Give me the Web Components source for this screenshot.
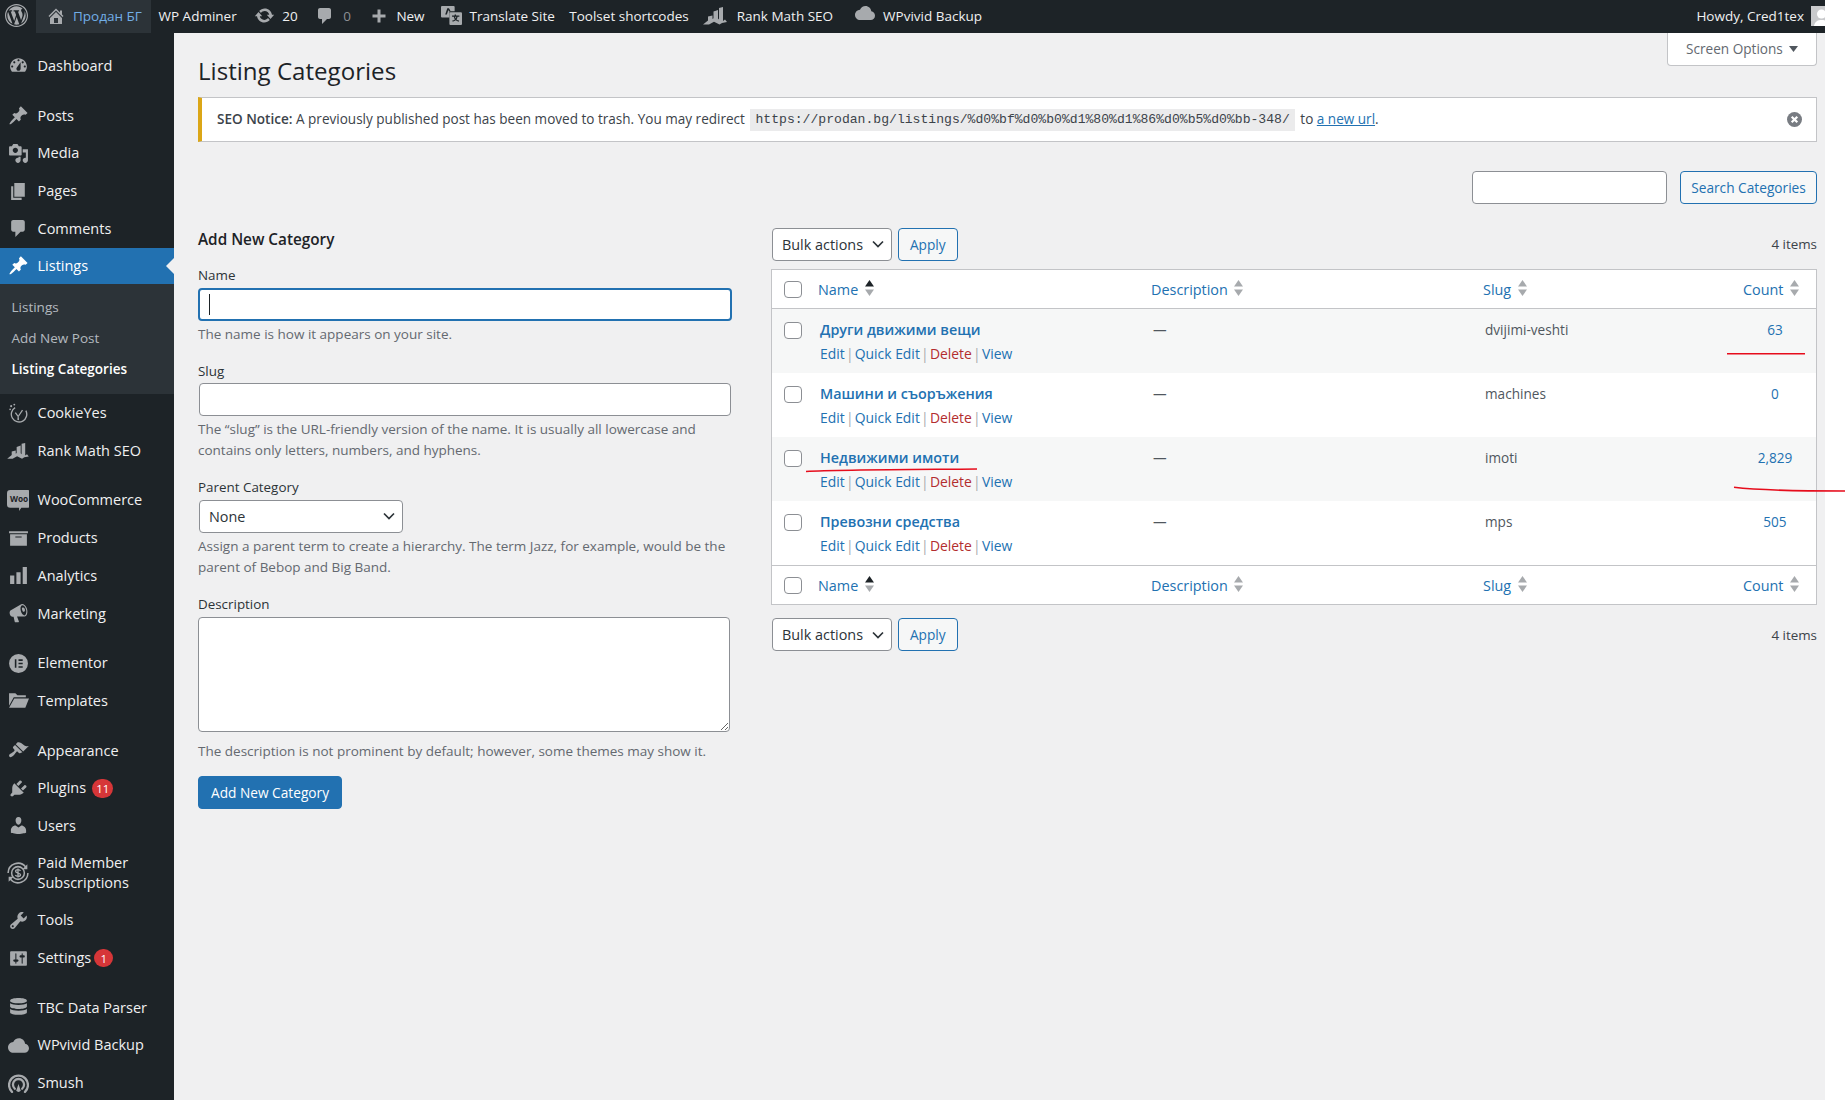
<!DOCTYPE html>
<html lang="en">
<head>
<meta charset="utf-8">
<title>Listing Categories</title>
<style>
  html { background: #fff; }
  body { margin: 0; font-family: "Open Sans", "Liberation Sans", sans-serif; font-size: 13.5px; color: #3c434a; }
</style>
</head>
<body>
<wp-shell>
  <wp-adminbar slot="bar"></wp-adminbar>
  <wp-sidebar slot="side">
    <wp-menu-item icon="dashboard">Dashboard</wp-menu-item>
    <wp-menu-sep></wp-menu-sep>
    <wp-menu-item icon="pin">Posts</wp-menu-item>
    <wp-menu-item icon="media">Media</wp-menu-item>
    <wp-menu-item icon="pages">Pages</wp-menu-item>
    <wp-menu-item icon="comment">Comments</wp-menu-item>
    <wp-menu-item icon="pin" active>Listings</wp-menu-item>
    <wp-submenu>
      <wp-sub-item>Listings</wp-sub-item>
      <wp-sub-item>Add New Post</wp-sub-item>
      <wp-sub-item current>Listing Categories</wp-sub-item>
    </wp-submenu>
    <wp-menu-item icon="cookie">CookieYes</wp-menu-item>
    <wp-menu-item icon="rank">Rank Math SEO</wp-menu-item>
    <wp-menu-sep></wp-menu-sep>
    <wp-menu-item icon="woo">WooCommerce</wp-menu-item>
    <wp-menu-item icon="archive">Products</wp-menu-item>
    <wp-menu-item icon="chart">Analytics</wp-menu-item>
    <wp-menu-item icon="megaphone">Marketing</wp-menu-item>
    <wp-menu-sep></wp-menu-sep>
    <wp-menu-item icon="elementor">Elementor</wp-menu-item>
    <wp-menu-item icon="folder">Templates</wp-menu-item>
    <wp-menu-sep></wp-menu-sep>
    <wp-menu-item icon="brush">Appearance</wp-menu-item>
    <wp-menu-item icon="plugin" badge="11">Plugins</wp-menu-item>
    <wp-menu-item icon="user">Users</wp-menu-item>
    <wp-menu-item icon="money" tall>Paid Member Subscriptions</wp-menu-item>
    <wp-menu-item icon="wrench">Tools</wp-menu-item>
    <wp-menu-item icon="sliders" badge="1">Settings</wp-menu-item>
    <wp-menu-sep></wp-menu-sep>
    <wp-menu-item icon="database">TBC Data Parser</wp-menu-item>
    <wp-menu-item icon="cloud">WPvivid Backup</wp-menu-item>
    <wp-menu-item icon="smush">Smush</wp-menu-item>
  </wp-sidebar>
  <wp-content slot="main">
    <wp-page-head>Listing Categories</wp-page-head>
    <wp-notice>
      <b>SEO Notice:</b> A previously published post has been moved to trash. You may redirect <code>https://prodan.bg/listings/%d0%bf%d0%b0%d1%80%d1%86%d0%b5%d0%bb-348/</code> to <a>a new url</a>.
    </wp-notice>
    <wp-search-box>Search Categories</wp-search-box>
    <wp-columns>
      <wp-term-form slot="left"></wp-term-form>
      <div slot="right">
        <wp-tablenav></wp-tablenav>
        <wp-terms-table>
          <wp-term-head></wp-term-head>
          <wp-term-row name="Други движими вещи" slug="dvijimi-veshti" count="63" alt></wp-term-row>
          <wp-term-row name="Машини и съоръжения" slug="machines" count="0"></wp-term-row>
          <wp-term-row name="Недвижими имоти" slug="imoti" count="2,829" alt></wp-term-row>
          <wp-term-row name="Превозни средства" slug="mps" count="505"></wp-term-row>
          <wp-term-head foot></wp-term-head>
        </wp-terms-table>
        <wp-tablenav bottom></wp-tablenav>
      </div>
    </wp-columns>
  </wp-content>
</wp-shell>
<red-marks></red-marks>

<script>
const ICONS = {
  logo: '<path d="M20 10c0-5.52-4.48-10-10-10S0 4.48 0 10s4.48 10 10 10 10-4.48 10-10zM10 1.01c4.96 0 8.99 4.03 8.99 8.99s-4.03 8.99-8.99 8.99S1.01 14.96 1.01 10 5.04 1.01 10 1.01zM8.01 14.82L4.96 6.61c.49-.03 1.05-.08 1.05-.08.43-.05.38-1.01-.06-.99 0 0-1.29.1-2.13.1-.15 0-.33 0-.52-.01 1.44-2.17 3.9-3.6 6.7-3.6 2.09 0 3.99.79 5.41 2.09-.6-.08-1.45.35-1.45 1.42 0 .66.38 1.22.79 1.88.31.54.5 1.22.5 2.21 0 1.34-1.27 4.48-1.27 4.48l-2.71-7.5c.48-.03.75-.16.75-.16.43-.05.38-1.1-.05-1.08 0 0-1.3.11-2.14.11-.78 0-2.11-.11-2.11-.11-.43-.02-.48 1.06-.05 1.08l.84.08 1.12 3.04zm6.02 2.15L16.64 10s.67-1.69.39-3.81c.63 1.14.94 2.42.94 3.81 0 2.96-1.56 5.58-3.94 6.97zM2.68 6.77L6.5 17.25c-2.67-1.3-4.47-4.08-4.47-7.25 0-1.16.2-2.23.65-3.23zm7.45 4.53l2.29 6.25c-.75.27-1.57.42-2.42.42-.72 0-1.41-.11-2.06-.3z"/>',
  home: '<path d="M16 8.5l1.53 1.53-1.06 1.06L10 4.62l-6.47 6.47-1.06-1.06L10 2.5l4 4v-2h2v4zm-6-2.46l6 5.99V18H4v-5.97zM12 17v-5H8v5h4z"/>',
  update: '<path d="M10.2 3.28c3.53 0 6.43 2.61 6.92 6h2.08l-3.5 4-3.5-4h2.32c-.45-1.97-2.21-3.45-4.32-3.45-1.45 0-2.73.71-3.54 1.78L4.95 5.66C6.23 4.2 8.11 3.28 10.2 3.28zm-.4 13.44c-3.52 0-6.43-2.61-6.92-6H.8l3.5-4c1.17 1.33 2.33 2.67 3.5 4H5.48c.45 1.97 2.21 3.45 4.32 3.45 1.45 0 2.73-.71 3.54-1.78l1.71 1.95c-1.28 1.46-3.15 2.38-5.25 2.38z"/>',
  comment: '<path d="M5 2h9c1.1 0 2 .9 2 2v7c0 1.1-.9 2-2 2h-2l-5 5v-5H5c-1.1 0-2-.9-2-2V4c0-1.1.9-2 2-2z"/>',
  plus: '<path d="M17 7v3h-5v5H9v-5H4V7h5V2h3v5h5z" transform="translate(-.5 1.5)"/>',
  translate: '<path d="M1 1h11a1 1 0 0 1 1 1v4H8v6H1a1 1 0 0 1-1-1V2a1 1 0 0 1 1-1z"/><path d="M4 9l2-6h1.6l1.6 3H7.6L7 4.8 5.6 9z" fill="#1d2327"/><path fill-rule="evenodd" d="M9 7h10a1 1 0 0 1 1 1v10a1 1 0 0 1-1 1H9a1 1 0 0 1-1-1V8a1 1 0 0 1 1-1zm1.5 3v1.3h1.7c.2 1 .6 1.8 1 2.4-.7.5-1.5.8-2.5 1l.5 1.2c1.2-.3 2.100-.7 2.800-1.300.7.6 1.600 1 2.800 1.300l.5-1.200c-1-.2-1.800-.5-2.500-1 .5-.7.8-1.400 1-2.400h1.700V10h-3.200V9h-1.300v1zm3.500 2.800c-.3-.4-.5-.9-.6-1.500h1.200c-.1.600-.3 1.100-.6 1.500z"/>',
  rank: '<path d="M0 18.500L5 14.500V10.500L9.500 9.500V13L10.500 12.300V5.500L15 4V12.500L16 13.500V2L20 1V15L22 13.500L24 16L19 17L16.500 18.500L11 15.800L6 18.500z"/>',
  cloud: '<path d="M16.300 8.300C16 5.300 13.500 3 10.500 3 8 3 5.900 4.500 5 6.700c-2.800.2-5 2.400-5 5.200C0 14.700 2.300 17 5.200 17h10.500c2.400 0 4.300-1.900 4.300-4.300 0-2.200-1.600-4-3.700-4.400z"/>',
  dashboard: '<path fill-rule="evenodd" d="M3.760 16h12.480c1.100-1.370 1.760-3.110 1.760-5 0-4.420-3.580-8-8-8s-8 3.580-8 8c0 1.890.66 3.630 1.760 5zM10 4c.55 0 1 .45 1 1s-.45 1-1 1-1-.45-1-1 .45-1 1-1zM6 6c.55 0 1 .45 1 1s-.45 1-1 1-1-.45-1-1 .45-1 1-1zm8 0c.55 0 1 .45 1 1s-.45 1-1 1-1-.45-1-1 .45-1 1-1zm-5.370 5.550L12 7v6c0 1.100-.9 2-2 2s-2-.9-2-2c0-.57.24-1.080.63-1.450zM4 10c.55 0 1 .45 1 1s-.45 1-1 1-1-.45-1-1 .45-1 1-1zm12 0c.55 0 1 .45 1 1s-.45 1-1 1-1-.45-1-1 .45-1 1-1z"/>',
  pin: '<path d="M10.440 3.020l1.820-1.820 6.360 6.350-1.830 1.820c-1.050-.68-2.480-.57-3.410.36l-.75.75c-.92.93-1.040 2.350-.35 3.410l-1.830 1.820-2.410-2.410-2.800 2.790c-.42.42-3.380 2.710-3.800 2.290s1.860-3.390 2.280-3.810l2.790-2.790L4.100 9.360l1.830-1.820c1.050.69 2.480.57 3.400-.36l.75-.75c.93-.92 1.050-2.350.36-3.410z"/>',
  media: '<path fill-rule="evenodd" d="M13 11V4c0-.55-.45-1-1-1h-1.670L9 1H5L3.670 3H2c-.55 0-1 .45-1 1v7c0 .55.45 1 1 1h10c.55 0 1-.45 1-1zM7 4.500c1.380 0 2.500 1.120 2.500 2.500S8.380 9.500 7 9.500 4.500 8.380 4.500 7 5.620 4.500 7 4.500z"/><path d="M14 6h5v10.500c0 1.380-1.120 2.500-2.500 2.500S14 17.880 14 16.500s1.120-2.500 2.500-2.500c.17 0 .34.02.5.05V9h-3V6zm-4 8.050V13h2v3.500c0 1.380-1.120 2.500-2.500 2.500S7 17.880 7 16.500 8.120 14 9.500 14c.17 0 .34.02.5.05z"/>',
  pages: '<path d="M6 15V2h10v13H6zm-1 1h8v2H3V5h2v11z"/>',
  cookie: '<path d="M6.500 3.800A8 8 0 1 0 17.600 7l-1.200.6A6.700 6.700 0 1 1 7.100 5z"/><path d="M6.500 9.500l1-.7 2.200 3 3.600-5.300 1 .7-4.600 6.700z"/><rect x="9" y="13.500" width="1.400" height="2.800"/><circle cx="3" cy="3" r="1"/><circle cx="6" cy="1.500" r=".9"/><circle cx="2" cy="6" r=".8"/>',
  woo: '<path d="M3 1h16a3 3 0 0 1 3 3v10a3 3 0 0 1-3 3h-6l-2 3v-3H3a3 3 0 0 1-3-3V4a3 3 0 0 1 3-3z"/><text x="11" y="12" text-anchor="middle" font-family="Open Sans, sans-serif" font-size="7.500" font-weight="700" fill="#1d2327">Woo</text>',
  archive: '<path fill-rule="evenodd" d="M19 3v2H1V3h18zM2 6h16v11H2V6zm11 3V8H7v1h6z"/>',
  chart: '<path d="M18 18V2h-4v16h4zm-6 0V7H8v11h4zm-6 0v-8H2v8h4z"/>',
  megaphone: '<path fill-rule="evenodd" d="M18.150 5.940c.46 1.620.38 3.220-.02 4.480-.42 1.280-1.260 2.180-2.300 2.480-.16.06-.26.06-.4.06H8.600l1.800 4.700c.1.300-.2.640-.5.640H7c-.3 0-.5-.2-.6-.5L5.300 13h-1c-.5.060-1.080-.18-1.540-.62s-.88-1.080-1.060-1.880c-.24-.8-.2-1.560-.02-2.200.18-.62.58-1.080 1.060-1.300l9-5.400c.34-.22.6-.35.98-.46 1.040-.3 2.240.1 3.220.98.98.86 1.840 2.260 2.260 3.860zm-2.580 5.980c.4-.1.740-.34 1.040-.7.58-.7.860-1.760.860-3.040-.02-.64-.1-1.300-.28-1.980-.34-1.360-1.020-2.500-1.780-3.240-.56-.54-1.280-.96-1.900-.84-.2.040-.32.100-.5.220-.58.42-.96 1.200-1.080 2.260-.1.900-.02 1.850.32 2.920.42 1.600 1.240 2.940 2.200 3.720.48.38.96.620 1.420.7zm-1.300-3.500a2 2 0 1 0-1-3.800c-.12 1.300.300 2.700 1 3.800z"/>',
  elementor: '<path fill-rule="evenodd" d="M10 1a9 9 0 1 0 0 18 9 9 0 0 0 0-18zM6.500 6H8v8H6.500zM10 6h4v1.500h-4zm0 3.250h4v1.500h-4zm0 3.250h4V14h-4z"/>',
  folder: '<path d="M1 3h6l2 2h8v2H5.500L1 15z"/><path d="M6 8h14l-3.500 9H1z"/>',
  brush: '<path d="M14.480 11.060L7.410 3.990l1.500-1.500c.5-.56 2.300-.47 3.510.32 1.210.8 1.430 1.280 2.910 2.100 1.180.64 2.450 1.260 4.450.85zm-.71.71L6.700 4.700 4.930 6.470c-.39.39-.39 1.020 0 1.410l1.060 1.060c.39.39.39 1.030 0 1.420-.6.6-1.430 1.110-2.210 1.690-.35.26-.7.53-1.010.84C1.430 13.230.4 14.950 1.400 15.950s2.720-.03 4.060-1.370c.3-.31.58-.66.84-1.010.58-.78 1.090-1.610 1.690-2.210.39-.39 1.020-.39 1.410 0l1.060 1.060c.39.39 1.020.39 1.410 0z"/>',
  plugin: '<path d="M13.110 4.360L9.870 7.600 8 5.730l3.240-3.240c.35-.34 1.050-.2 1.560.32.52.51.66 1.210.31 1.550zm-8 1.770l.91-1.120 9.010 9.010-1.190.84c-.71.71-2.630 1.160-3.820 1.160H6.140L4.900 17.260c-.59.59-1.540.59-2.120 0-.59-.58-.59-1.530 0-2.120l1.240-1.240v-3.880c0-1.130.4-3.190 1.090-3.890zm7.260 3.970l3.240-3.240c.34-.35 1.040-.21 1.550.31.52.51.66 1.210.31 1.550l-3.240 3.250z"/>',
  user: '<path d="M10 9.250c-2.270 0-2.730-3.440-2.730-3.440C7 4.020 7.820 2 9.970 2c2.160 0 2.980 2.020 2.710 3.810 0 0-.41 3.440-2.680 3.440zm0 2.570L12.720 10c2.390 0 4.520 2.330 4.520 4.530v2.490s-3.650 1.130-7.240 1.130c-3.650 0-7.240-1.130-7.240-1.130v-2.490c0-2.250 1.940-4.480 4.470-4.480z"/>',
  money: '<g fill="none" stroke="currentColor"><circle cx="10" cy="10" r="5.800" stroke-width="1.400"/><path d="M1 10a9 9 0 0 1 16-5.500M19 10a9 9 0 0 1-16 5.500" stroke-width="1.400"/><path d="M12.200 8.200c-.4-.9-1.200-1.200-2.200-1.200-1.300 0-2.200.6-2.200 1.500 0 2.200 4.500.9 4.500 3.100 0 .9-1 1.500-2.300 1.500-1.100 0-2-.4-2.400-1.300M10 5.800v8.400" stroke-width="1.200"/></g><path d="M18.500 2v4.500H14zM1.500 18v-4.500H6z"/>',
  wrench: '<path fill-rule="evenodd" d="M16.680 9.770c-1.340 1.340-3.300 1.670-4.950.99l-5.410 6.520c-.99.99-2.590.99-3.580 0s-.99-2.590 0-3.570l6.520-5.420c-.68-1.650-.35-3.610.99-4.950 1.280-1.280 3.120-1.620 4.720-1.060l-2.890 2.890 2.820 2.820 2.860-2.870c.53 1.580.18 3.390-1.080 4.650zM3.810 16.210c.4.39 1.040.39 1.430 0 .4-.4.4-1.040 0-1.430-.39-.4-1.030-.4-1.430 0-.39.39-.39 1.030 0 1.430z"/>',
  sliders: '<path fill-rule="evenodd" d="M18 16V4c0-.55-.45-1-1-1H3c-.55 0-1 .45-1 1v12c0 .55.45 1 1 1h14c.55 0 1-.45 1-1zM8 11h1c.55 0 1 .45 1 1s-.45 1-1 1H8v1.500c0 .28-.22.5-.5.5s-.5-.22-.5-.5V13H6c-.55 0-1-.45-1-1s.45-1 1-1h1V5.500c0-.28.22-.5.5-.5s.5.22.5.5V11zm5-2h-1c-.55 0-1-.45-1-1s.45-1 1-1h1V5.500c0-.28.22-.5.5-.5s.5.22.5.5V7h1c.55 0 1 .45 1 1s-.45 1-1 1h-1v5.500c0 .28-.22.5-.5.5s-.5-.22-.5-.5V9z"/>',
  database: '<path d="M10 1c4 0 8 .8 8 2.500S14 6 10 6 2 5.200 2 3.500 6 1 10 1zM2 6c1.500 1.200 4.500 1.600 8 1.600s6.500-.4 8-1.600v3c0 1.500-4 2.400-8 2.400S2 10.500 2 9zm0 5.500c1.500 1.200 4.500 1.600 8 1.600s6.500-.4 8-1.600v3c0 1.700-4 2.500-8 2.500s-8-.8-8-2.500z"/>',
  smush: '<g fill="none" stroke="currentColor" stroke-linecap="round"><path stroke-width="2.200" d="M3.800 18a9 9 0 1 1 12.400 0"/><path stroke-width="2.200" d="M6.500 15a5.300 5.300 0 1 1 7 0"/></g><path d="M7.800 17l2.200-6.500 2.200 6.500a2.800 2.800 0 0 1-4.400 0z"/>'
};

function svgIcon(name, w, h, vb) {
  return `<svg xmlns="http://www.w3.org/2000/svg" width="${w}" height="${h || w}" viewBox="${vb || '0 0 20 20'}" fill="currentColor" aria-hidden="true">${ICONS[name]}</svg>`;
}

class WpShell extends HTMLElement {
  constructor() {
    super();
    this.attachShadow({ mode: 'open' });
    this.shadowRoot.innerHTML = `<style>
      :host { display: grid; grid-template-columns: 174px 1fr; grid-template-rows: 33px 1067px; width: 1825px; height: 1100px; overflow: hidden; background: #f0f0f1; }
      .bar { grid-column: 1 / 3; }
    </style>
    <div class="bar"><slot name="bar"></slot></div>
    <slot name="side"></slot>
    <slot name="main"></slot>`;
  }
}

class WpAdminbar extends HTMLElement {
  constructor() {
    super();
    this.attachShadow({ mode: 'open' });
    this.shadowRoot.innerHTML = `<style>
      :host { display: flex; align-items: center; box-sizing: border-box; height: 33px; padding-bottom: 1.5px; background: #1d2327; color: #f0f0f1; font-size: 13.5px; overflow: hidden; white-space: nowrap; }
      .ico { color: #a7aaad; display: flex; flex: none; }
      .logo { margin-left: 5px; width: 31px; }
      .site { display: flex; align-items: center; align-self: flex-start; height: 33px; padding: 0 0 1.5px 10px; background: #2c3338; width: 115px; box-sizing: border-box; color: #72aee6; gap: 7px; }
      .muted { color: #8c8f94; }
      .right { margin-left: auto; display: flex; align-items: center; }
      .avatar { width: 21px; height: 20px; margin-left: 7px; margin-right: -7px; display: block; flex: none; }
    </style>
    <span class="ico logo">${svgIcon('logo', 23)}</span>
    <span class="site"><span class="ico">${svgIcon('home', 20)}</span>Продан БГ</span>
    <span style="margin-left:7.5px">WP Adminer</span>
    <span class="ico" style="margin-left:17px">${svgIcon('update', 21)}</span>
    <span style="margin-left:7.500px">20</span>
    <span class="ico" style="margin-left:17.500px">${svgIcon('comment', 20)}</span>
    <span class="muted" style="margin-left:8px">0</span>
    <span class="ico" style="margin-left:18.500px">${svgIcon('plus', 20)}</span>
    <span style="margin-left:7px">New</span>
    <span class="ico" style="margin-left:16.500px">${svgIcon('translate', 21)}</span>
    <span style="margin-left:7.500px">Translate Site</span>
    <span style="margin-left:14.500px;margin-right:-1.500px">Toolset shortcodes</span>
    <span class="ico" style="margin-left:16px">${svgIcon('rank', 24, 20, '0 0 24 20')}</span>
    <span style="margin-left:9.500px">Rank Math SEO</span>
    <span class="ico" style="margin-left:22px;margin-top:-5px">${svgIcon('cloud', 20)}</span>
    <span style="margin-left:8px">WPvivid Backup</span>
    <span class="right">Howdy, Cred1tex
      <svg class="avatar" viewBox="0 0 21 20"><rect width="21" height="20" fill="#c9cacc"/><circle cx="10.500" cy="8" r="4.500" fill="#fff"/><path d="M3 20c1-5 4-6 7.500-6s6.500 1 7.500 6z" fill="#fff"/></svg>
    </span>`;
  }
}

class WpSidebar extends HTMLElement {
  constructor() {
    super();
    this.attachShadow({ mode: 'open' });
    this.shadowRoot.innerHTML = `<style>
      :host { display: block; background: #1d2327; padding-top: 14.15px; box-sizing: border-box; height: 1067px; overflow: hidden; color: #f0f0f1; font-size: 14.5px; }
    </style><slot></slot>`;
  }
}

class WpMenuSep extends HTMLElement {
  constructor() {
    super();
    this.attachShadow({ mode: 'open' });
    this.shadowRoot.innerHTML = `<style>:host { display: block; height: 12px; }</style>`;
  }
}

class WpMenuItem extends HTMLElement {
  constructor() {
    super();
    this.attachShadow({ mode: 'open' });
    const name = this.getAttribute('icon');
    const size = name === 'woo' ? 22 : name === 'money' ? 24 : 21;
    const glyph = name === 'rank' ? svgIcon('rank', 22, 18, '0 0 24 20') : svgIcon(name, size);
    const badge = this.getAttribute('badge');
    this.shadowRoot.innerHTML = `<style>
      :host { display: flex; align-items: center; height: 37.7px; padding-left: 7px; position: relative; box-sizing: border-box; }
      :host([tall]) { height: 56.7px; }
      :host([active]) { background: #2271b1; color: #fff; height: 36.7px; }
      .ico { width: 22px; display: flex; justify-content: center; flex: none; color: #a7aaad; margin-right: 8.5px; }
      :host([active]) .ico { color: #fff; }
      .label { line-height: 20px; }
      :host([tall]) .label { width: 125px; }
      .badge { display: inline-flex; align-items: center; justify-content: center; background: #d63638; color: #fff; border-radius: 9.5px; height: 18.500px; min-width: 19px; padding: 0 var(--bp, 0); font-size: 11.5px; margin-left: var(--bm, 6px); box-sizing: border-box; }
      :host([badge="11"]) { --bp: 4px; --bm: 6px; }
      :host([badge="1"]) { --bm: 3px; }
      .arrow { position: absolute; right: 0; top: 50%; margin-top: -8px; border: 8px solid transparent; border-right-color: #f0f0f1; border-left: 0; }
    </style>
    <span class="ico">${glyph}</span>
    <span class="label"><slot></slot></span>
    ${badge ? `<span class="badge">${badge}</span>` : ''}
    ${this.hasAttribute('active') ? '<span class="arrow"></span>' : ''}`;
  }
}

class WpSubmenu extends HTMLElement {
  constructor() {
    super();
    this.attachShadow({ mode: 'open' });
    this.shadowRoot.innerHTML = `<style>
      :host { display: block; background: #2c3338; height: 110px; padding-top: 7.5px; box-sizing: border-box; }
    </style><slot></slot>`;
  }
}

class WpSubItem extends HTMLElement {
  constructor() {
    super();
    this.attachShadow({ mode: 'open' });
    this.shadowRoot.innerHTML = `<style>
      :host { display: flex; align-items: center; height: 31px; padding-left: 11.5px; color: rgba(240,246,252,.7); font-size: 13.5px; }
      :host([current]) { color: #fff; font-weight: 600; }
    </style><slot></slot>`;
  }
}

class WpContent extends HTMLElement {
  constructor() {
    super();
    this.attachShadow({ mode: 'open' });
    this.shadowRoot.innerHTML = `<style>
      :host { display: block; padding: 0 8px 0 24px; min-width: 0; }
    </style><slot></slot>`;
  }
}

class WpPageHead extends HTMLElement {
  constructor() {
    super();
    this.attachShadow({ mode: 'open' });
    this.shadowRoot.innerHTML = `<style>
      :host { display: flex; justify-content: space-between; align-items: flex-start; height: 64px; }
      h1 { margin: 22px 0 0; font-size: 24.1px; font-weight: 400; line-height: 31px; color: #1d2327; }
      .opts { display: flex; align-items: center; box-sizing: border-box; width: 150px; height: 32.7px; padding: 0 0 0 18px; background: #fff; border: 1px solid #c3c4c7; border-top: 0; border-radius: 0 0 4px 4px; color: #646970; font-size: 13.6px; white-space: nowrap; }
      .opts svg { margin-left: 6px; }
    </style>
    <h1><slot></slot></h1>
    <div class="opts">Screen Options<svg width="9" height="6" viewBox="0 0 9 6"><path d="M0 0h9L4.500 6z" fill="#50575e"/></svg></div>`;
  }
}

class WpNotice extends HTMLElement {
  constructor() {
    super();
    this.attachShadow({ mode: 'open' });
    this.shadowRoot.innerHTML = `<style>
      :host { display: flex; align-items: center; justify-content: space-between; box-sizing: border-box; height: 44.7px; padding: 0 14px 0 15px; background: #fff; border: 1px solid #c3c4c7; border-left: 4px solid #dba617; white-space: nowrap; font-size: 13.55px; }
      span { margin-top: 2px; }
      ::slotted(b) { font-weight: 600; }
      ::slotted(code) { display: inline-block; font-family: "Liberation Mono", monospace; font-size: 13.1px; background: #ebebec; padding: 0 5px; line-height: 22px; margin: -2px 2px 0; vertical-align: middle; }
      ::slotted(a) { color: #2271b1; text-decoration: underline; }
    </style>
    <span><slot></slot></span>
    <svg width="15" height="15" viewBox="0 0 15 15"><circle cx="7.500" cy="7.500" r="7.500" fill="#787c82"/><path d="M4.700 4.700l5.600 5.600M10.300 4.700l-5.600 5.600" stroke="#fff" stroke-width="2.200"/></svg>`;
  }
}

class WpSearchBox extends HTMLElement {
  constructor() {
    super();
    this.attachShadow({ mode: 'open' });
    this.shadowRoot.innerHTML = `<style>
      :host { display: flex; justify-content: flex-end; gap: 13px; margin-top: 29.3px; height: 33px; }
      input { box-sizing: border-box; width: 195px; height: 33px; border: 1px solid #8c8f94; border-radius: 4px; margin: 0; background: #fff; }
      wp-button { width: 137px; }
    </style>
    <input type="search" aria-label="Search"><wp-button><slot></slot></wp-button>`;
  }
}

class WpButton extends HTMLElement {
  constructor() {
    super();
    this.attachShadow({ mode: 'open' });
    this.shadowRoot.innerHTML = `<style>
      :host { display: flex; align-items: center; justify-content: center; box-sizing: border-box; height: 32.7px; border: 1px solid #2271b1; border-radius: 4px; background: #f6f7f7; color: #2271b1; font-size: 13.7px; white-space: nowrap; }
      :host([primary]) { background: #2271b1; color: #fff; }
    </style><slot></slot>`;
  }
}

class WpSelect extends HTMLElement {
  constructor() {
    super();
    this.attachShadow({ mode: 'open' });
    this.shadowRoot.innerHTML = `<style>
      :host { display: flex; align-items: center; justify-content: space-between; box-sizing: border-box; height: 32.7px; padding: 0 7px 0 9.5px; border: 1px solid #8c8f94; border-radius: 4px; background: #fff; color: #2c3338; font-size: 14.4px; white-space: nowrap; }
    </style>
    <slot></slot>
    <svg width="12" height="8" viewBox="0 0 12 8"><path d="M1 1.500l5 5 5-5" fill="none" stroke="#2c3338" stroke-width="1.700"/></svg>`;
  }
}

class WpColumns extends HTMLElement {
  constructor() {
    super();
    this.attachShadow({ mode: 'open' });
    this.shadowRoot.innerHTML = `<style>
      :host { display: grid; grid-template-columns: 534px 1045.5px; column-gap: 39.5px; margin-top: 24px; }
    </style>
    <div><slot name="left"></slot></div>
    <div><slot name="right"></slot></div>`;
  }
}

class WpField extends HTMLElement {
  constructor() {
    super();
    this.attachShadow({ mode: 'open' });
    const hint = this.getAttribute('hint') || '';
    this.shadowRoot.innerHTML = `<style>
      :host { display: block; margin-top: var(--field-top, 17px); }
      .label { display: block; line-height: 20px; color: #2c3338; font-size: 13.4px; }
      .ctl { margin-top: var(--ctl-top, 2.5px); }
      p { margin: var(--hint-top, 2.8px) 0 0; line-height: 21px; color: #646970; font-size: 13.5px; }
    </style>
    <label class="label">${this.getAttribute('label')}</label>
    <div class="ctl"><slot></slot></div>
    <p>${hint}</p>`;
  }
}

class WpTermForm extends HTMLElement {
  constructor() {
    super();
    this.attachShadow({ mode: 'open' });
    this.shadowRoot.innerHTML = `<style>
      :host { display: block; padding-top: 1.5px; }
      h2 { margin: 0; font-size: 15.3px; font-weight: 600; line-height: 20px; color: #1d2327; }
      input, textarea { display: block; box-sizing: border-box; margin: 0; background: #fff; border: 1px solid #8c8f94; border-radius: 4px; }
      .name { position: relative; }
      .name input { width: 533.5px; height: 33.3px; border: 2px solid #2271b1; }
      .caret { position: absolute; left: 10.5px; top: 6.5px; width: 1px; height: 21px; background: #1d2327; }
      .slug { width: 532px; height: 32.7px; margin-left: .5px; }
      wp-select { width: 204.5px; margin-left: .5px; }
      textarea { width: 532px; height: 115.3px; }
      wp-button { width: 144px; margin-top: 14.5px; }
    </style>
    <h2>Add New Category</h2>
    <wp-field label="Name" hint="The name is how it appears on your site." style="--field-top:15.5px;--ctl-top:2.7px">
      <div class="name"><input type="text" aria-label="Name"><span class="caret"></span></div>
    </wp-field>
    <wp-field label="Slug" hint="The “slug” is the URL-friendly version of the name. It is usually all lowercase and contains only letters, numbers, and hyphens." style="--field-top:16.5px;--ctl-top:1.8px">
      <input class="slug" type="text" aria-label="Slug">
    </wp-field>
    <wp-field label="Parent Category" hint="Assign a parent term to create a hierarchy. The term Jazz, for example, would be the parent of Bebop and Big Band." style="--field-top:16.5px;--ctl-top:3px;--hint-top:3.2px">
      <wp-select>None</wp-select>
    </wp-field>
    <wp-field label="Description" hint="The description is not prominent by default; however, some themes may show it." style="--field-top:16.5px;--ctl-top:2.7px;--hint-top:8.5px">
      <textarea aria-label="Description"></textarea>
    </wp-field>
    <wp-button primary>Add New Category</wp-button>`;
  }
}

class WpTablenav extends HTMLElement {
  constructor() {
    super();
    this.attachShadow({ mode: 'open' });
    this.shadowRoot.innerHTML = `<style>
      :host { display: flex; align-items: center; gap: 6px; height: 32.7px; }
      :host([bottom]) { margin-top: 13px; }
      wp-select { width: 120px; }
      wp-button { width: 60.5px; }
      .count { margin-left: auto; font-size: 13.4px; color: #3c434a; }
    </style>
    <wp-select>Bulk actions</wp-select><wp-button>Apply</wp-button><span class="count">4 items</span>`;
  }
}

class WpTermsTable extends HTMLElement {
  constructor() {
    super();
    this.attachShadow({ mode: 'open' });
    this.shadowRoot.innerHTML = `<style>
      :host { display: block; margin: 8.6px 0 0 -.5px; background: #fff; border: 1px solid #c3c4c7; box-sizing: border-box; --cols: 43.5px 333px 332px 254px 81px; }
    </style><slot></slot>`;
  }
}

class WpCheck extends HTMLElement {
  constructor() {
    super();
    this.attachShadow({ mode: 'open' });
    this.shadowRoot.innerHTML = `<style>
      :host { display: block; box-sizing: border-box; width: 18px; height: 17px; margin-left: 11.5px; background: #fff; border: 1px solid #8c8f94; border-radius: 4px; }
    </style>`;
  }
}

class WpSortLabel extends HTMLElement {
  constructor() {
    super();
    this.attachShadow({ mode: 'open' });
    const up = this.hasAttribute('asc') ? '#1d2327' : '#a7aaad';
    this.shadowRoot.innerHTML = `<style>
      :host { display: flex; align-items: center; color: #2271b1; font-size: 14.4px; padding-left: var(--pad, 2.5px); white-space: nowrap; }
      svg { margin-left: 6.5px; margin-top: -3px; }
    </style>
    <slot></slot>
    <svg width="9" height="16" viewBox="0 0 9 16"><path d="M4.500 0L9 6.500H0z" fill="${up}"/><path d="M0 9.500h9L4.500 16z" fill="#a7aaad"/></svg>`;
  }
}

class WpTermHead extends HTMLElement {
  constructor() {
    super();
    this.attachShadow({ mode: 'open' });
    this.shadowRoot.innerHTML = `<style>
      :host { display: grid; grid-template-columns: var(--cols); align-items: center; box-sizing: border-box; height: 39px; border-bottom: 1px solid #c3c4c7; }
      :host([foot]) { border-bottom: 0; border-top: 1px solid #c3c4c7; }
    </style>
    <wp-check></wp-check>
    <wp-sort-label asc>Name</wp-sort-label>
    <wp-sort-label>Description</wp-sort-label>
    <wp-sort-label>Slug</wp-sort-label>
    <wp-sort-label style="--pad:8.5px">Count</wp-sort-label>`;
  }
}

class WpTermRow extends HTMLElement {
  constructor() {
    super();
    this.attachShadow({ mode: 'open' });
    this.shadowRoot.innerHTML = `<style>
      :host { display: grid; grid-template-columns: var(--cols); align-items: start; height: 64px; padding-top: 9.4px; box-sizing: border-box; background: #fff; font-size: 13.6px; color: #50575e; }
      :host([alt]) { background: #f6f7f7; }
      wp-check { margin-top: 3px; }
      .cell { padding-left: 4.5px; line-height: 21px; }
      .title { color: #2271b1; font-weight: 600; font-size: 14.35px; white-space: nowrap; }
      .actions { margin-top: 4.3px; line-height: 20px; color: #a7aaad; white-space: nowrap; font-size: 13.9px; }
      .actions a { color: #2271b1; }
      .actions a.del { color: #b32d2e; }
      .actions i { font-style: normal; margin: 0 -2.4px; }
      .count { text-align: center; color: #2271b1; line-height: 21px; }
    </style>
    <wp-check></wp-check>
    <div class="cell">
      <div class="title">${this.getAttribute('name')}</div>
      <div class="actions"><a>Edit</a> <i>|</i> <a>Quick Edit</a> <i>|</i> <a class="del">Delete</a> <i>|</i> <a>View</a></div>
    </div>
    <div class="cell">—</div>
    <div class="cell">${this.getAttribute('slug')}</div>
    <div class="count">${this.getAttribute('count')}</div>`;
  }
}

class RedMarks extends HTMLElement {
  constructor() {
    super();
    this.attachShadow({ mode: 'open' });
    // hand drawn underlines lying over the screenshot
    this.shadowRoot.innerHTML = `<style>
      :host { position: absolute; left: 0; top: 0; width: 1845px; height: 1100px; pointer-events: none; }
    </style>
    <svg width="1845" height="1100" fill="none" stroke="#e60d1c" stroke-width="1.6">
      <path d="M1727 353.700H1805"/>
      <path d="M1734 487.300C1760 490.500 1800 491 1845 491"/>
      <path d="M806 471.500C840 469.500 920 469.500 977 469"/>
    </svg>`;
  }
}

customElements.define('wp-button', WpButton);
customElements.define('wp-select', WpSelect);
customElements.define('wp-check', WpCheck);
customElements.define('wp-sort-label', WpSortLabel);
customElements.define('wp-field', WpField);
customElements.define('wp-shell', WpShell);
customElements.define('wp-adminbar', WpAdminbar);
customElements.define('wp-sidebar', WpSidebar);
customElements.define('wp-menu-sep', WpMenuSep);
customElements.define('wp-menu-item', WpMenuItem);
customElements.define('wp-submenu', WpSubmenu);
customElements.define('wp-sub-item', WpSubItem);
customElements.define('wp-content', WpContent);
customElements.define('wp-page-head', WpPageHead);
customElements.define('wp-notice', WpNotice);
customElements.define('wp-search-box', WpSearchBox);
customElements.define('wp-columns', WpColumns);
customElements.define('wp-term-form', WpTermForm);
customElements.define('wp-tablenav', WpTablenav);
customElements.define('wp-terms-table', WpTermsTable);
customElements.define('wp-term-head', WpTermHead);
customElements.define('wp-term-row', WpTermRow);
customElements.define('red-marks', RedMarks);
</script>
</body>
</html>
